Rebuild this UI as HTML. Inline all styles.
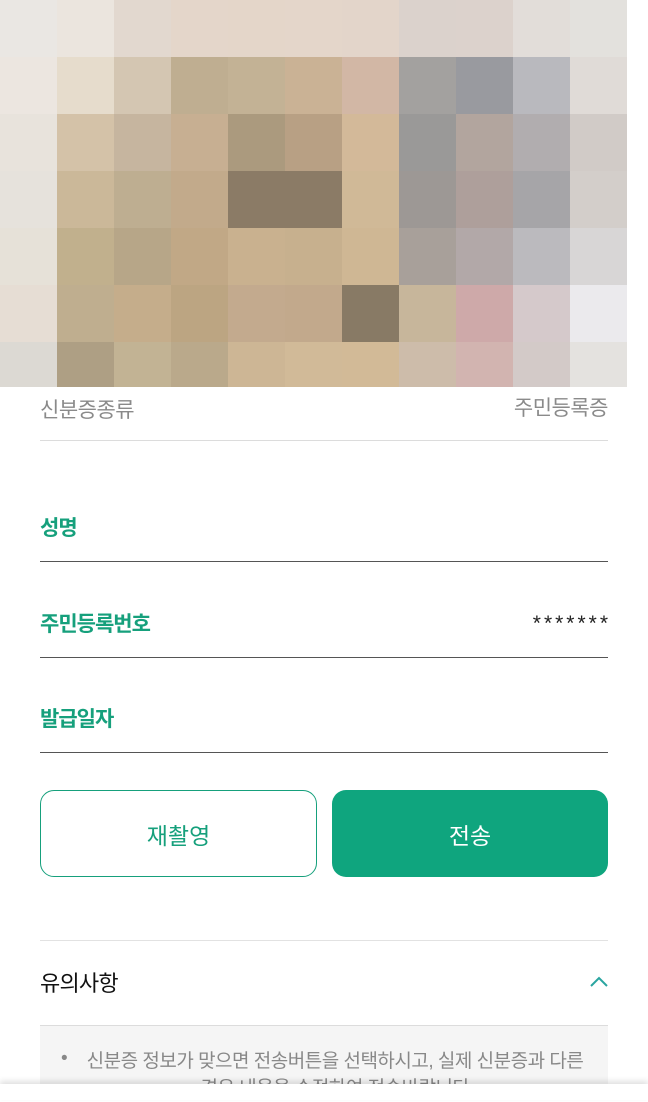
<!DOCTYPE html>
<html><head><meta charset="utf-8"><style>
*{margin:0;padding:0;box-sizing:border-box}
body{width:648px;height:1100px;overflow:hidden;background:#fff;font-family:"Liberation Sans","Noto Sans CJK KR",sans-serif;position:relative}
.grid{position:absolute;left:0;top:0;width:627px;height:387px;display:grid;grid-template-columns:repeat(11,57px);grid-template-rows:repeat(6,57px) 45px}
.a{position:absolute}
.line{position:absolute;left:40px;width:568px;height:1px}
.lbl{position:absolute;left:40px;font-size:21px;font-weight:bold;color:#16a07c;letter-spacing:-1px}
</style></head><body>
<div class="grid" id="g"></div>
<script>
var c=[
"eae7e3 ebe5de e2d8cf e4d6ca e4d6c9 e4d6ca e3d5ca dbd2cc dcd2cc e2ddd9 e3e1dd",
"ece6e0 e6dccc d4c6b2 bfae91 c3b295 cab295 d2b7a5 a3a19f 999a9f b9b9be e0dbd7",
"e8e3dc d4c2a8 c6b59f c7af92 ab9a7e b8a084 d3b999 9a9998 b2a59e b1adaf d1cbc7",
"e6e2dc cbb899 beae91 c2aa8b 8b7b66 8b7b66 d0b997 9d9895 ae9f9b a6a5a8 d3ceca",
"e6e1d8 c1b08d b7a688 c1a886 c9b18f c7b08e cfb794 a8a09a b2a8a8 bbbabe d8d6d6",
"e6ddd4 bfae8f c5ad8b bca582 c3aa8e c2a98c 887a65 c7b69b cea9a9 d5c9cb ebeaed",
"dcd9d3 ae9f84 c2b394 baa98b cdb695 d1ba98 d2ba97 cdbcaa d2b4b0 d3cac8 e4e2df"];
var h="";c.forEach(function(r){r.split(" ").forEach(function(x){h+='<div style="background:#'+x+'"></div>'})});
document.getElementById("g").innerHTML=h;
</script>
<div class="a" style="left:40px;top:394px;font-size:21px;color:#8a8a8a;letter-spacing:-0.5px">신분증종류</div>
<div class="a" style="right:40px;top:392px;font-size:21px;color:#8a8a8a;letter-spacing:-0.5px">주민등록증</div>
<div class="line" style="top:440px;background:#dcdcdc"></div>
<div class="lbl" style="top:512px">성명</div>
<div class="line" style="top:561px;background:#555"></div>
<div class="lbl" style="top:608px">주민등록번호</div>
<div class="a" style="right:37px;top:612px;font-size:21px;color:#222;letter-spacing:3px">*******</div>
<div class="line" style="top:657px;background:#555"></div>
<div class="lbl" style="top:703px">발급일자</div>
<div class="line" style="top:752px;background:#555"></div>
<div class="a" style="left:40px;top:790px;width:277px;height:87px;border:1.5px solid #16a07c;border-radius:14px;color:#16a07c;font-size:23px;display:flex;align-items:center;justify-content:center">재촬영</div>
<div class="a" style="left:332px;top:790px;width:276px;height:87px;background:#0fa57e;border-radius:14px;color:#fff;font-size:23px;display:flex;align-items:center;justify-content:center">전송</div>
<div class="line" style="top:940px;background:#e2e2e2"></div>
<div class="a" style="left:40px;top:966px;font-size:22px;color:#111;letter-spacing:-0.8px">유의사항</div>
<svg class="a" style="left:589px;top:975px" width="20" height="14" viewBox="0 0 20 14"><path d="M2 11 L10 3 L18 11" fill="none" stroke="#2aa5a0" stroke-width="2"/></svg>
<div class="line" style="top:1025px;background:#dcdcdc"></div>
<div class="a" style="left:40px;top:1026px;width:568px;height:74px;background:#f5f5f5"></div>
<div class="a" style="left:61px;top:1048px;font-size:19px;color:#888">•</div>
<div class="a" style="left:70px;top:1048px;width:530px;font-size:19px;color:#888;text-align:center;line-height:27px;letter-spacing:-0.5px;white-space:nowrap">신분증 정보가 맞으면 전송버튼을 선택하시고, 실제 신분증과 다른<br>경우 내용을 수정하여 전송바랍니다</div>
<div class="a" style="left:0;top:1084px;width:648px;height:16px;background:#fff;box-shadow:0 -3px 6px rgba(0,0,0,0.12)"></div>
</body></html>
